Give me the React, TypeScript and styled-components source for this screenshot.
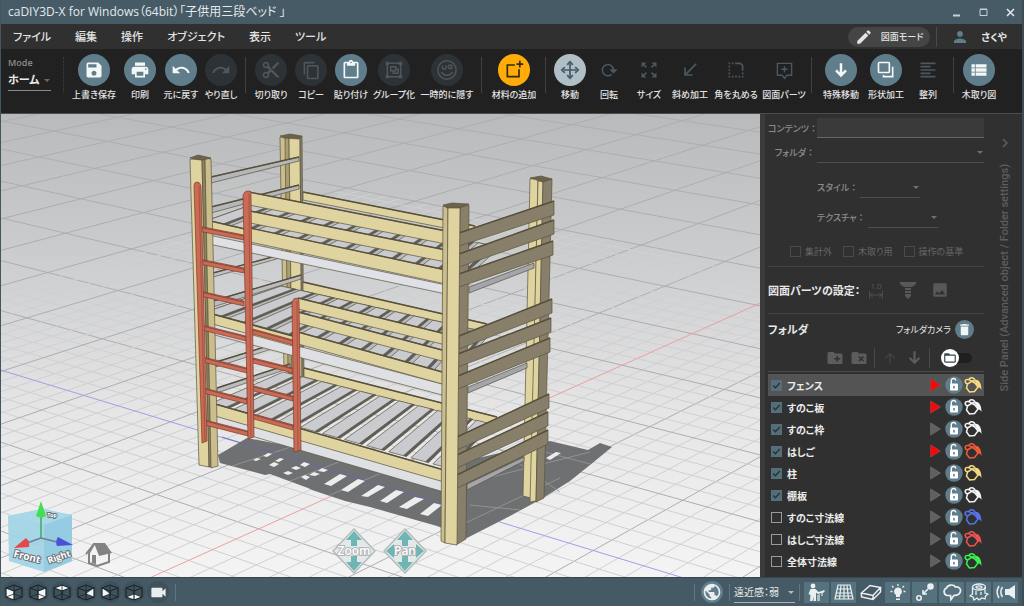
import React from "react";
import styled, { createGlobalStyle } from "styled-components";
import {
  MdSave, MdPrint, MdUndo, MdRedo, MdContentCut, MdContentCopy, MdContentPaste,
  MdZoomOutMap, MdCallReceived, MdRoundedCorner, MdFormatAlignLeft, MdViewList,
  MdPerson, MdEdit, MdCreateNewFolder, MdDelete, MdFolderOpen, MdImage,
  MdArrowUpward, MdVideocam, MdPublic, MdChevronRight,
} from "react-icons/md";

const Global = createGlobalStyle`
  *, *::before, *::after { box-sizing: border-box; }
  body {
    margin: 0;
    background: #212121;
    font-family: "Open Sans", "Noto Sans CJK JP", sans-serif;
    font-feature-settings: "palt";
    font-size: 10px;
    color: #e4e4e4;
  }
  button, input, select {
    font: inherit;
    font-feature-settings: inherit;
    color: inherit;
    margin: 0;
  }
  button { background: none; border: 0; padding: 0; cursor: pointer; }
`;

/* ---------- window ---------- */

const Window = styled.div`
  display: flex;
  flex-direction: column;
  height: 100vh;
  min-height: 600px;
  border-left: 1px solid #43565f;
  border-right: 2px solid #3c4d56;
  overflow: hidden;
`;

const TitleBar = styled.header`
  display: flex;
  align-items: center;
  flex: none;
  height: 24px;
  padding: 0 6px 0 7px;
  background: #465b66;
`;

const Title = styled.h1`
  flex: 1;
  margin: 0;
  font-size: 12px;
  font-weight: 400;
  line-height: 24px;
  white-space: nowrap;
  color: #e3e9ec;
`;

const WindowButtons = styled.div`
  display: flex;
  gap: 16px;
`;

const WindowButton = styled.button`
  width: 11px;
  height: 12px;
  svg { display: block; }
`;

const MenuBar = styled.nav`
  display: flex;
  align-items: center;
  flex: none;
  height: 25px;
  padding: 0 15px 0 12px;
  background: #303030;
`;

const MenuList = styled.div`
  display: flex;
  flex: 1;
  gap: 24px;
`;

const MenuItem = styled.button`
  font-size: 11px;
  font-weight: 500;
  line-height: 24px;
  white-space: nowrap;
`;

const DrawingMode = styled.button`
  display: flex;
  align-items: center;
  gap: 8px;
  height: 20px;
  padding: 0 7px;
  border-radius: 10px;
  background: #454545;
  font-size: 9px;
  font-weight: 500;
  white-space: nowrap;
`;

const MenuRule = styled.span`
  width: 1px;
  height: 20px;
  margin: 0 14px 0 6px;
  background: #4a4a4a;
`;

const User = styled.button`
  display: flex;
  align-items: center;
  gap: 12px;
  font-size: 10px;
  font-weight: 700;
  white-space: nowrap;
  svg { color: #607d8b; }
`;

/* ---------- tool bar ---------- */

const ToolBar = styled.div`
  display: flex;
  align-items: flex-start;
  flex: none;
  height: 65px;
  padding: 4px 8px 0 7px;
  background: #212121;
  border-bottom: 1px solid #4d4d4d;
  overflow: hidden;
`;

const ModeField = styled.label`
  display: flex;
  flex-direction: column;
  flex: none;
  width: 43px;
  margin-right: 8px;
  padding-top: 3px;
  font-size: 9px;
  font-weight: 600;
  line-height: 14px;
  color: #8c8c8c;
`;

const SelectBox = styled.span<{ $line?: string; $width?: number }>`
  position: relative;
  display: block;
  flex: ${(p) => (p.$width ? "none" : "1")};
  width: ${(p) => (p.$width ? p.$width + "px" : "auto")};
  border-bottom: 1px solid ${(p) => p.$line ?? "#4b4f50"};
  &::after {
    content: "";
    position: absolute;
    right: 1px;
    top: 50%;
    margin-top: -1px;
    border: 3px solid transparent;
    border-top-color: currentColor;
    opacity: 0.7;
    pointer-events: none;
  }
`;

const Select = styled.select<{ $size?: number; $weight?: number }>`
  display: block;
  width: 100%;
  height: 20px;
  padding: 0;
  border: 0;
  outline: 0;
  appearance: none;
  background: transparent;
  font-size: ${(p) => p.$size ?? 10}px;
  font-weight: ${(p) => p.$weight ?? 400};
  color: #ececec;
`;

const ToolRule = styled.span<{ $dotted?: boolean }>`
  flex: none;
  width: 0;
  height: 36px;
  margin: 4px 5px 0 4px;
  border-left: 1px ${(p) => (p.$dotted ? "dotted" : "solid")} #414141;
`;

const ToolButton = styled.button<{ $width: number }>`
  display: flex;
  flex-direction: column;
  align-items: center;
  flex: none;
  width: ${(p) => p.$width}px;
  font-size: 9px;
  font-weight: 500;
  line-height: 16px;
  white-space: nowrap;
`;

type Tone = "on" | "off" | "plain" | "accent" | "active";
const discColors: Record<Tone, [string, string]> = {
  on: ["#607d8b", "#f4f7f8"],
  off: ["#2d3236", "#50565a"],
  plain: ["transparent", "#4a5860"],
  accent: ["#ffab0a", "#33290f"],
  active: ["#b0bec5", "#46586a"],
};

const Disc = styled.span<{ $tone: Tone }>`
  display: flex;
  align-items: center;
  justify-content: center;
  width: 32px;
  height: 32px;
  margin: 1px 0;
  border-radius: 50%;
  background: ${(p) => discColors[p.$tone][0]};
  color: ${(p) => discColors[p.$tone][1]};
`;

/* ---------- work area ---------- */

const WorkArea = styled.main`
  display: flex;
  flex: 1;
  min-height: 0;
`;

const Viewport = styled.section`
  position: relative;
  flex: 1;
  min-width: 0;
  overflow: hidden;
`;

const Canvas = styled.svg`
  display: block;
  width: 100%;
  height: 100%;
`;

const NavButton = styled.button<{ $left: number; $bottom: number }>`
  position: absolute;
  left: ${(p) => p.$left}px;
  bottom: ${(p) => p.$bottom}px;
  svg { display: block; }
`;

const SidePanel = styled.aside`
  display: flex;
  flex: none;
  width: 262px;
  background: #303030;
  border-left: 5px solid #3b3b3b;
`;

const PanelBody = styled.div`
  width: 219px;
  padding: 4px 0 0 3px;
`;

const PanelTab = styled.button`
  display: flex;
  flex-direction: column;
  align-items: center;
  flex: 1;
  padding: 20px 0 0 4px;
  color: #5e5e5e;
`;

const TabText = styled.span`
  margin-top: 12px;
  writing-mode: vertical-rl;
  transform: rotate(180deg);
  font-family: Roboto, "Noto Sans", sans-serif;
  font-size: 11px;
  font-weight: 500;
  line-height: 16px;
  white-space: nowrap;
`;

const Field = styled.label<{ $indent?: number; $gap?: number }>`
  display: flex;
  align-items: center;
  height: 20px;
  margin-top: ${(p) => p.$gap ?? 0}px;
  padding-left: ${(p) => p.$indent ?? 0}px;
  font-size: 9px;
  font-weight: 500;
  color: #8c8c8c;
`;

const FieldName = styled.span<{ $width?: number }>`
  flex: none;
  width: ${(p) => (p.$width ? p.$width + "px" : "auto")};
  padding-right: 2px;
  text-align: right;
  white-space: nowrap;
`;

const Colon = styled.span`
  font-feature-settings: normal;
`;

const TextInput = styled.input`
  flex: 1;
  min-width: 0;
  height: 20px;
  padding: 0 4px;
  border: 0;
  border-bottom: 1px solid #666;
  outline: 0;
  background: #3a3a3a;
`;

const Flags = styled.div`
  display: flex;
  gap: 11px;
  height: 40px;
  padding: 18px 0 0 22px;
  border-bottom: 1px solid #444;
`;

const Flag = styled.label`
  display: flex;
  align-items: center;
  gap: 4px;
  height: 12px;
  font-size: 9px;
  color: #666;
  white-space: nowrap;
`;

const Check = styled.input<{ $dim?: boolean }>`
  flex: none;
  width: 11px;
  height: 11px;
  border: 1px solid ${(p) => (p.$dim ? "#4a4a4a" : "#9a9a9a")};
  appearance: none;
  background: transparent;
  &:checked {
    border-color: #546e7a;
    background: #546e7a
      url("data:image/svg+xml,%3Csvg xmlns='http://www.w3.org/2000/svg' viewBox='0 0 9 9'%3E%3Cpath d='M1.2 4.6l2.2 2.2L7.8 2' fill='none' stroke='%23263238' stroke-width='1.4'/%3E%3C/svg%3E")
      center / 9px no-repeat;
  }
`;

const PartsRow = styled.div`
  display: flex;
  align-items: center;
  justify-content: space-between;
  height: 47px;
  padding-right: 35px;
  border-bottom: 1px solid #444;
`;

const PartsIcons = styled.div`
  display: flex;
  gap: 14px;
  color: #585858;
`;

const Heading = styled.h2`
  margin: 0;
  font-size: 11px;
  font-weight: 700;
  white-space: nowrap;
  color: #e8e8e8;
`;

const IconButton = styled.button`
  display: flex;
  align-items: center;
  justify-content: center;
  width: 18px;
  height: 18px;
`;

const DimensionButton = styled(IconButton)`
  flex-direction: column;
  justify-content: flex-end;
  font-size: 8px;
  line-height: 10px;
`;

const FolderHead = styled.div`
  display: flex;
  align-items: center;
  justify-content: space-between;
  height: 30px;
  padding-right: 10px;
`;

const FolderCamera = styled.div`
  display: flex;
  align-items: center;
  gap: 4px;
  font-size: 9px;
`;

const RoundButton = styled.button`
  display: flex;
  align-items: center;
  justify-content: center;
  width: 19px;
  height: 19px;
  border-radius: 50%;
  background: #607d8b;
  color: #f0f4f5;
`;

const FolderTools = styled.div`
  display: flex;
  align-items: center;
  gap: 6px;
  height: 28px;
  padding-left: 58px;
  border-bottom: 1px solid #4a4a4a;
  color: #5c5c5c;
`;

const SmallRule = styled.span`
  width: 1px;
  height: 20px;
  background: #484848;
`;

const Toggle = styled.button`
  display: flex;
  align-items: center;
  width: 31px;
  height: 10px;
  margin-left: 5px;
  border-radius: 5px;
  background: #1f1f1f;
`;

const Knob = styled.span`
  display: flex;
  align-items: center;
  justify-content: center;
  width: 18px;
  height: 18px;
  border-radius: 50%;
  background: #fff;
  color: #37474f;
`;

const FolderList = styled.ul`
  margin: 2px 0 0;
  padding: 0;
  list-style: none;
`;

const FolderRow = styled.li<{ $selected?: boolean }>`
  display: flex;
  align-items: center;
  height: 22px;
  padding: 0 2px 0 3px;
  background: ${(p) => (p.$selected ? "#545454" : "transparent")};
`;

const FolderName = styled.label`
  display: flex;
  align-items: center;
  gap: 5px;
  flex: 1;
  font-size: 10px;
  font-weight: 700;
  white-space: nowrap;
  color: #ececec;
`;

const RowIcons = styled.div`
  display: flex;
  align-items: center;
  gap: 1px;
`;

const RowIcon = styled.button<{ $gap?: number }>`
  display: block;
  margin-right: ${(p) => p.$gap ?? 0}px;
  svg { display: block; }
`;

/* ---------- status bar ---------- */

const StatusBar = styled.footer`
  display: flex;
  align-items: center;
  flex: none;
  height: 29px;
  padding: 0 4px 0 2px;
  background: #455a64;
  border-top: 1px solid #37474f;
`;

const ViewGroup = styled.div`
  display: flex;
  align-items: center;
  flex: 1;
  gap: 2px;
`;

const ViewButton = styled.button`
  display: flex;
  align-items: center;
  justify-content: center;
  width: 22px;
  height: 22px;
  border-radius: 50%;
  background: #3f525b;
  color: #e8eef0;
`;

const StatusRule = styled.span`
  width: 1px;
  height: 17px;
  margin: 0 4px;
  background: #62767f;
`;

const Globe = styled(ViewButton)`
  background: #607d8b;
  margin: 0 2px;
`;

const Toggles = styled.div`
  display: flex;
  gap: 2px;
`;

const StatusToggle = styled.button<{ $off?: boolean }>`
  display: flex;
  align-items: center;
  justify-content: center;
  width: 25px;
  height: 21px;
  background: ${(p) => (p.$off ? "transparent" : "#56727f")};
  color: #eaf0f2;
`;

/* ---------- icons ---------- */

const Icon = ({ size = 20, view = 24, width = 2, children }: {
  size?: number; view?: number; width?: number; children: React.ReactNode;
}) => (
  <svg width={size} height={size} viewBox={`0 0 ${view} ${view}`} fill="none" stroke="currentColor" strokeWidth={width}>
    {children}
  </svg>
);

const GroupIcon = () => (
  <Icon width={1.8}>
    <path d="M4 4h16v16H4z" />
    <path d="M2 2h4v4H2zM18 2h4v4h-4zM2 18h4v4H2zM18 18h4v4h-4z" fill="currentColor" stroke="none" />
    <path d="M8 8h6v5H8zM11 13v3h6v-5h-3" />
  </Icon>
);
const HideIcon = () => (
  <Icon size={22} width={1.6}>
    <circle cx="12" cy="12" r="10" />
    <path d="M7 7v2c0 3 4 3 4 0V7" />
    <circle cx="15.5" cy="8.500" r="2" />
    <path d="M6 14c2 5 10 5 12 0" />
  </Icon>
);
const MaterialIcon = () => (
  <Icon>
    <path d="M13 6H4v14h14v-9" />
    <path d="M19 1v8M15 5h8" />
  </Icon>
);
const MoveIcon = () => (
  <Icon>
    <path d="M12 4v16M4 12h16" />
    <path d="M8.6 5.8 12 2.2l3.4 3.6M8.6 18.2l3.4 3.6 3.4-3.6M5.8 8.6 2.2 12l3.6 3.4M18.2 8.6l3.6 3.4-3.6 3.4" />
  </Icon>
);
const RotateIcon = () => (
  <Icon size={18}>
    <path d="M15.5 17.8A7.5 7.5 0 1 1 18 12.5" />
    <path d="M12.5 11h11l-5.5 6z" fill="currentColor" stroke="none" />
  </Icon>
);
const PartsIcon = () => (
  <Icon size={19} width={1.8}>
    <path d="M3 3h18v15h-6l-3 4-3-4H3zM12 6.5v8M8 10.5h8" />
  </Icon>
);
const DownIcon = () => (
  <Icon width={3}>
    <path d="M12 4v14M6 12.5l6 6 6-6" />
  </Icon>
);
const ShapeIcon = () => (
  <Icon>
    <rect x="3" y="3" width="13" height="12" rx="1" />
    <path d="M20 8v12H9v-2" />
  </Icon>
);
const DimensionIcon = () => (
  <svg width="18" height="10" viewBox="0 0 18 10" fill="none" stroke="currentColor">
    <path d="M1 0v10M17 0v10M2 5h14M5 2 2 5l3 3M13 2l3 3-3 3" />
  </svg>
);
const ScrewIcon = () => (
  <svg width="18" height="18" viewBox="0 0 18 18" fill="currentColor">
    <path d="M1 1h16v2l-4 3H5L1 3zM6 7h6v2H6zM6 10h6v2H6zM6 13h6v2l-3 3-3-3z" />
  </svg>
);
const FolderRemoveIcon = () => (
  <svg width="18" height="18" viewBox="0 0 24 24" fill="currentColor">
    <path d="M20 6h-8l-2-2H4a2 2 0 0 0-2 2v12a2 2 0 0 0 2 2h16a2 2 0 0 0 2-2V8a2 2 0 0 0-2-2z" />
    <path d="M12 10l6 6M18 10l-6 6" stroke="#303030" strokeWidth="2" />
  </svg>
);
const FolderDownIcon = () => (
  <Icon size={17} width={3}>
    <path d="M12 3v16M5 12.500l7 7 7-7" />
  </Icon>
);
const PlayMark = ({ on }: { on?: boolean }) => (
  <svg width="11" height="14" viewBox="0 0 11 14">
    <path d="M.7 1 10.300 7 .7 13z" fill={on ? "#fb0505" : "#606060"} stroke={on ? "#a23b3b" : "#686868"} />
  </svg>
);
const LockMark = () => (
  <svg width="18" height="18" viewBox="0 0 18 18">
    <circle cx="9" cy="9" r="8.700" fill="#607d8b" />
    <path d="M6.300 8V5.200a2.300 2.300 0 0 1 4.600-.7" fill="none" stroke="#fff" strokeWidth="1.400" />
    <rect x="5" y="7.600" width="8" height="7" rx="1" fill="#fff" />
    <path d="M9 10v2.500" stroke="#546e7a" strokeWidth="1.400" />
  </svg>
);
const PaintMark = ({ color }: { color: string }) => (
  <svg width="18" height="18" viewBox="0 0 18 18" fill="none" stroke={color} strokeWidth="1.500">
    <path d="M3.500 8 9 4.500 14 11l-3.500 4.500-5 .5L2.500 12z" />
    <path d="M4 8C0 7 .5 3 4 3.500c3 .4 5 3 7 3.500M5 4c.5-3 5-3 6 .5" />
    <path d="M10 3.500c5 0 7.500 3 7.500 10.500-1-2-2-2.500-3.500-2.500z" fill={color} stroke="none" />
  </svg>
);

const cubeFaces: Record<string, string> = {
  front: "2,5 10,8 10,17 2,14",
  right: "10,8 18,5 18,14 10,17",
  top: "2,5 10,2 18,5 10,8",
  back: "10,11 18,5 18,14 10,11",
  left: "2,5 10,11 2,14",
  bottom: "2,14 10,11 18,14 10,17",
};
const ViewCube = ({ face }: { face: string }) => (
  <svg width="20" height="19" viewBox="0 0 20 19" fill="none" stroke="#1b262c" strokeWidth="1.200" strokeLinejoin="round">
    <polygon points={cubeFaces[face]} fill="#f5f7f7" stroke="none" />
    <path d="M2 5 10 2l8 3v9l-8 3-8-3zM2 5l8 3 8-3M10 8v9" />
    <path d="M10 2v9M2 14l8-3 8 3" strokeWidth="0.800" />
  </svg>
);

const PersonIcon = () => (
  <svg width="19" height="19" viewBox="0 0 19 19" fill="currentColor">
    <circle cx="6" cy="3" r="2.400" />
    <path d="M3.500 6h5l3 3 6-2v2l-2 1v3h-1v-3l-4 1-1.500-1.500V18H6.500v-5l-1 5H3l.5-6-2-1z" />
    <path d="M10 12l3-1v7h-3z" opacity=".6" />
  </svg>
);
const GridIcon = () => (
  <Icon size={20} view={20} width={1.2}>
    <path d="M4 3h12l3 14H1zM3.300 7h13.500M2.500 11h15M7 3 5.500 17M10 3v14M13 3l1.500 14M1.700 14h16.600" />
  </Icon>
);
const BoardIcon = () => (
  <Icon size={22} view={22} width={1.5}>
    <path d="M1.500 12 10 4.500l10.500 2L13 14.500zM1.500 12v4L13 18.500l7.500-7.500V6.500M13 14.500v4" />
  </Icon>
);
const BulbIcon = () => (
  <Icon size={18} view={18} width={1.3}>
    <path d="M9 4.500a4 4 0 0 1 2 7.400V14H7v-2.100a4 4 0 0 1 2-7.400zM7 15.500h4v1.500H7z" fill="currentColor" stroke="none" />
    <path d="M9 1v2M3 3l1.500 1.500M15 3l-1.500 1.500M1.500 8.500h2M14.500 8.500h2" />
  </Icon>
);
const LinkIcon = () => (
  <Icon size={19} view={19} width={1.6}>
    <circle cx="4" cy="15" r="2.200" />
    <circle cx="15.500" cy="3.500" r="2.500" fill="currentColor" />
    <path d="M13 6l-5 5M8 7v4h4" />
  </Icon>
);
const CloudIcon = () => (
  <Icon size={20} view={20} width={1.7}>
    <path d="M5 13.500a4 4 0 0 1-.5-7.500C6 2.500 11.500 2 13.500 5c4-.5 6 2.500 4.500 5.500-1 2.500-3 3-6 2.800L9 17.500 8.500 13.500z" />
  </Icon>
);
const StumpIcon = () => (
  <Icon size={20} view={20} width={1.3}>
    <ellipse cx="10" cy="5" rx="6.500" ry="3" />
    <ellipse cx="10" cy="5" rx="3" ry="1.200" />
    <path d="M3.500 5v7L1 14l3 1 1 3 3-2 2 2 3-2 3 1 .5-3 2.500-2-3-1V5M7 9v4M12 10v3" />
  </Icon>
);
const SoundIcon = () => (
  <Icon size={20} view={20} width={1.5}>
    <path d="M9 7h4l6-4v14l-6-4H9z" fill="currentColor" stroke="none" />
    <path d="M6.500 5c-2 3-2 7 0 10M3 4C.5 8 .5 12 3 16" />
  </Icon>
);

/* ---------- 3D scene ---------- */

type Pt = [number, number];
const lerp = (a: Pt, b: Pt, t: number): Pt => [a[0] + (b[0] - a[0]) * t, a[1] + (b[1] - a[1]) * t];
const toPoints = (pts: Pt[]) => pts.map((p) => p.map((n) => n.toFixed(1)).join(",")).join(" ");

const WOOD = "#dfd3a0";
const WOOD_DEEP = "#cbbe8c";
const SHADE = "#877f69";
const EDGE = "#5a543f";
const RED = "#cb6a55";

/* Ground plane: every line of a family meets at one point of the horizon. */
const origin: Pt = [365, 481];
const vanishX: Pt = [2140, -318];
const vanishZ: Pt = [-2260, -318];
const ground = (u: number, v: number): Pt => {
  const a = 0.0113 * u;
  const b = 0.008 * v;
  const w = 1 + a + b;
  return [
    (origin[0] + a * vanishX[0] + b * vanishZ[0]) / w,
    (origin[1] + a * vanishX[1] + b * vanishZ[1]) / w,
  ];
};

const GroundLine = ({ from, to, color }: { from: Pt; to: Pt; color: string }) => {
  const a = ground(...from);
  const b = ground(...to);
  return <line x1={a[0]} y1={a[1]} x2={b[0]} y2={b[1]} stroke={color} strokeWidth="1" />;
};

const Ground = () => {
  const lines: React.ReactNode[] = [];
  for (let i = -30; i <= 120; i++) {
    const major = i % 5 === 0;
    const end = major ? 160 : 30;
    if (i === 0 || (!major && i > 30)) continue;
    const color = major ? "#adaeb0" : "#cfd0d2";
    lines.push(<GroundLine key={`u${i}`} from={[i, -30]} to={[i, end]} color={color} />);
    lines.push(<GroundLine key={`v${i}`} from={[-30, i]} to={[end, i]} color={color} />);
  }
  return (
    <g>
      {lines}
      <GroundLine from={[-30, 0]} to={[80, 0]} color="#ee9f9f" />
      <GroundLine from={[0, -30]} to={[0, 80]} color="#9f9fe6" />
    </g>
  );
};

const Quad = ({ pts, fill, edge = EDGE }: { pts: Pt[]; fill: string; edge?: string }) => (
  <polygon points={toPoints(pts)} fill={fill} stroke={edge} strokeWidth="0.7" strokeLinejoin="round" />
);

/* A board seen from its wide side: start and end of the upper edge, height at each end. */
const Board = ({ a, b, h, h2 = h, fill = WOOD }: { a: Pt; b: Pt; h: number; h2?: number; fill?: string }) => (
  <g>
    <Quad pts={[a, b, [b[0], b[1] + h2], [a[0], a[1] + h]]} fill={fill} />
    <line x1={a[0]} y1={a[1]} x2={b[0]} y2={b[1]} stroke="#57503c" strokeWidth="1.400" />
  </g>
);

const Slats = ({ front, back, count, open }: { front: [Pt, Pt]; back: [Pt, Pt]; count: number; open?: boolean }) => (
  <g>
    {!open && <Quad pts={[front[0], back[0], back[1], front[1]]} fill="#b9bbbe" />}
    {Array.from({ length: count }, (_, i) => {
      const t = i / count;
      const e = (i + 0.66) / count;
      const s = (i + 0.8) / count;
      return (
        <g key={i}>
          <Quad pts={[lerp(...front, e), lerp(...back, e), lerp(...back, s), lerp(...front, s)]} fill="#5c5d60" />
          <Quad pts={[lerp(...front, t), lerp(...back, t), lerp(...back, e), lerp(...front, e)]} fill="#c9cbcf" />
        </g>
      );
    })}
  </g>
);

const shadowHoles: Pt[][] = [
  [[263, 456], [268, 453], [272, 454], [267, 457]],
  [[253, 460], [257, 458], [261, 459], [256, 461]],
  [[275, 461], [280, 458], [284, 459], [279, 462]],
  [[269, 465], [274, 462], [279, 464], [274, 467]],
  [[300, 465], [304, 462], [310, 464], [305, 467]],
  [[291, 468], [296, 466], [301, 468], [296, 470]],
  [[283, 473], [288, 471], [293, 473], [288, 475]],
  [[318, 471], [322, 468], [328, 470], [324, 472]],
  [[309, 475], [314, 472], [320, 474], [315, 476]],
  [[301, 477], [305, 475], [310, 477], [306, 480]],
  [[324, 484], [340, 474], [347, 476], [331, 486]],
  [[341, 490], [358, 479], [365, 481], [348, 492]],
  [[361, 496], [378, 485], [385, 487], [368, 497]],
  [[380, 501], [396, 490], [404, 492], [387, 503]],
  [[399, 507], [415, 497], [424, 499], [407, 509]],
  [[420, 514], [434, 503], [442, 505], [428, 516]],
  [[546, 458], [556, 452], [561, 453], [550, 460]],
];

const ladderRungs: [Pt, Pt][] = [
  [[198, 226], [244, 235]], [[199, 259], [244, 268]], [[200, 291], [244, 301]],
  [[202, 325], [246, 336]], [[203, 357], [247, 368]], [[204, 388], [247, 399]],
  [[205, 420], [248, 431]], [[249, 328], [293, 340]], [[249, 357], [293, 368]],
  [[250, 385], [293, 396]], [[250, 413], [293, 425]],
];

const endBoards: [number, number, number, number][] = [
  [459, 233, 554, 201], [459, 254, 554, 220], [459, 274, 553, 241],
  [459, 336, 552, 299], [458, 354, 551, 318], [458, 376, 550, 338],
  [457, 437, 549, 394], [457, 455, 548, 412], [457, 475, 548, 430],
];

const Bed = () => (
  <g>
    {/* shadow on the floor */}
    <polygon
      points="218,455 247,438 300,448 442,470 470,460 550,441 588,450 600,443 612,447 590,465 570,481 543,498 510,516 467,538 437,526 370,507 345,501 312,490 308,488 270,474 265,475 220,463"
      fill="#6f7072"
    />
    <g stroke="#9a9b9d" strokeWidth="0.800">
      <path d="M232 466 300 444M290 481 380 446M330 495 440 448M455 528 560 478M480 480 590 452M500 450 560 492M470 505 520 510M545 452 590 464" />
    </g>
    <path d="M222 437 442 504" stroke="#6667b0" strokeWidth="0.800" />
    {shadowHoles.map((h, i) => <polygon key={i} points={toPoints(h)} fill="#ededee" />)}

    {/* far left post with the end boards */}
    <Quad pts={[[280, 137], [288, 137], [291, 372], [284, 370]]} fill={WOOD_DEEP} />
    <Quad pts={[[285, 137], [289, 137], [292, 374], [288, 373]]} fill="#a99d72" />
    <Quad pts={[[289, 137], [300, 138], [302, 377], [292, 375]]} fill={WOOD} />
    <Quad pts={[[300, 138], [302, 136], [304, 376], [302, 377]]} fill={SHADE} />
    <Quad pts={[[280, 136], [290, 134], [302, 136], [299, 139], [284, 138]]} fill="#6a634a" />
    <Board a={[211, 177]} b={[299, 157]} h={6} h2={4} fill="#b4b6ba" />
    <Board a={[211, 207]} b={[299, 185]} h={6} h2={4} fill="#b4b6ba" />
    <Board a={[213, 273]} b={[287, 253]} h={4} h2={3} fill="#c0c2c5" />
    <Board a={[213, 301]} b={[301, 275]} h={6} h2={4} fill="#b9bbbf" />
    <Board a={[216, 362]} b={[284, 341]} h={5} h2={4} fill="#c0c2c5" />
    <Board a={[217, 388]} b={[290, 364]} h={5} h2={4} fill="#b9bbbf" />

    {/* far right post */}
    <Quad pts={[[530, 179], [538, 178], [531, 498], [523, 496]]} fill={WOOD} />
    <Quad pts={[[538, 181], [543, 181], [536, 501], [530, 502]]} fill={WOOD} />
    <Quad pts={[[543, 181], [552, 179], [544, 498], [536, 502]]} fill={SHADE} />
    <Quad pts={[[530, 178], [541, 176], [552, 179], [543, 182]]} fill="#6a634a" />

    {/* top bunk */}
    <Board a={[303, 192]} b={[475, 226]} h={8} />
    <Slats front={[[203, 222], [458, 285]]} back={[[262, 201], [500, 247]]} count={11} />
    <Board a={[202, 219]} b={[245, 229]} h={9} h2={9} />
    <Quad pts={[[204, 234], [446, 285], [446, 294], [204, 243]]} fill="#e0e1e6" />
    <Board a={[250, 228]} b={[446, 270]} h={14} />
    <Board a={[250, 211]} b={[446, 250]} h={12} />
    <Board a={[249, 192]} b={[446, 231]} h={13} />

    {/* middle bunk */}
    <Board a={[303, 282]} b={[487, 324]} h={9} />
    <Slats front={[[206, 312], [455, 378]]} back={[[281, 286], [490, 333]]} count={11} />
    <Quad pts={[[207, 322], [446, 385], [446, 396], [207, 333]]} fill="#dfe0e4" />
    <Board a={[205, 312]} b={[300, 338]} h={10} />
    <Board a={[298, 332]} b={[446, 373]} h={12} />
    <Board a={[298, 312]} b={[446, 351]} h={11} />
    <Board a={[298, 298]} b={[446, 334]} h={11} />

    {/* bottom bunk */}
    <Board a={[304, 368]} b={[497, 417]} h={9} />
    <Slats front={[[212, 403], [455, 470]]} back={[[283, 372], [496, 425]]} count={11} open />
    <Quad pts={[[210, 414], [444, 481], [444, 492], [210, 424]]} fill="#dfe0e4" />
    <Board a={[208, 402]} b={[444, 470]} h={12} />

    {/* near left post */}
    <Quad pts={[[190, 159], [202, 160], [209, 467], [199, 465]]} fill={WOOD} />
    <Quad pts={[[202, 159], [205, 158], [211, 467], [209, 467]]} fill="#8d835f" />
    <Quad pts={[[205, 158], [211, 159], [218, 466], [211, 468]]} fill={WOOD_DEEP} />
    <Quad pts={[[190, 158], [198, 155], [211, 158], [203, 160]]} fill="#6a634a" />

    {/* ladder */}
    {ladderRungs.map(([a, b], i) => (
      <g key={i}>
        <Quad pts={[a, b, [b[0], b[1] + 5], [a[0], a[1] + 5]]} fill={RED} edge="#7a3d31" />
        <line x1={a[0]} y1={a[1] + 1} x2={b[0]} y2={b[1] + 1} stroke="#8c4a3d" strokeWidth="1" />
      </g>
    ))}
    <g fill={RED} stroke="#7a3d31" strokeWidth="0.700">
      <path d="M194 186q0-4 3-4t4 4l6 255-5 2z" />
      <path d="M243 196q1-5 5-5t3 3l3 243-6 2z" />
      <path d="M292 303q1-5 4-5t3 3l2 149-7 2z" />
    </g>
    <path d="M199 186l6 256M249 194l2 244M297 301l1 150" stroke="#a35445" strokeWidth="1" fill="none" />

    {/* near right post and end boards */}
    <Quad pts={[[460, 207], [469, 205], [466, 539], [456, 545]]} fill={SHADE} />
    <Quad pts={[[469, 287], [534, 263], [534, 268], [469, 293]]} fill="#a3a5ab" />
    <Quad pts={[[468, 387], [527, 363], [527, 368], [468, 393]]} fill="#a3a5ab" />
    <Quad pts={[[467, 484], [524, 457], [524, 461], [467, 490]]} fill="#a3a5ab" />
    {endBoards.map(([x1, y1, x2, y2], i) => (
      <Board key={i} a={[x1, y1]} b={[x2, y2]} h={13} h2={14} fill={SHADE} />
    ))}
    <Quad pts={[[443, 206], [448, 207], [445, 543], [441, 541]]} fill={WOOD_DEEP} />
    <Quad pts={[[448, 207], [460, 207], [457, 545], [445, 543]]} fill={WOOD} />
    <Quad pts={[[443, 205], [452, 203], [469, 204], [460, 208], [447, 208]]} fill="#6a634a" />
  </g>
);

const AxisCube = () => (
  <svg width="68" height="74" viewBox="6 500 68 74">
    <polygon points="8,516 42,509 72,515 72,561 44,572 9,561" fill="#9fd3e6" opacity="0.9" />
    <polygon points="8,516 42,509 72,515 44,525" fill="#a9d8e8" />
    <polygon points="44,525 72,515 72,561 44,572" fill="#95cce1" />
    <path d="M41 538V510" stroke="#3cae5a" strokeWidth="1.500" />
    <path d="M41 538 24 544M41 538l20 5" stroke="#6b7f99" strokeWidth="1.500" />
    <path d="M41 501l5 15q-5 3-10 0z" fill="#45dd52" />
    <path d="M14 548 26 538q4 3 3 9z" fill="#e5484a" />
    <path d="M73 545 58 537q-3 4-1 9z" fill="#4a50d8" />
    <g fontFamily="Open Sans, sans-serif" fontWeight="700" fill="#fff" stroke="#6d7478" strokeWidth="2" paintOrder="stroke" textAnchor="middle">
      <text x="27" y="560" fontSize="10" transform="rotate(14 27 557)">Front</text>
      <text x="59" y="560" fontSize="9" transform="rotate(-20 59 557)">Right</text>
      <text x="52" y="517" fontSize="5">Top</text>
    </g>
  </svg>
);

const HomeIcon = () => (
  <svg width="28" height="26" viewBox="0 0 28 26">
    <path d="M4 12v10l8 3 12-4V11L19 3 9 3z" fill="#f2f2f2" stroke="#828282" strokeWidth="2" />
    <path d="M9 3 1 13" stroke="#828282" strokeWidth="2" />
    <path d="M9 2h11l7 10-13 3z" fill="#828282" />
    <path d="M7 14h4v9l-4-1z" fill="#828282" />
  </svg>
);

const ArrowDiamond = ({ label, sideways }: { label: string; sideways?: boolean }) => (
  <svg width="44" height="46" viewBox="0 0 44 46">
    <path d="M22 1 43 23 22 45 1 23z" fill="#e3e9e9" stroke="#b3bcbc" strokeWidth="1.500" />
    <g fill="#6fb5b4">
      <path d="M22 3l8 9h-5v6h-6v-6h-5z" />
      <path d="M22 43l8-9h-5v-6h-6v6h-5z" />
      {sideways && <path d="M3 23l8-7v4h5v6h-5v4zM41 23l-8-7v4h-5v6h5v4z" />}
    </g>
    <text x="22" y="27" textAnchor="middle" fontFamily="Open Sans, sans-serif" fontSize="12" fontWeight="600" fill="#fff" stroke="#b0b4b5" strokeWidth="2" paintOrder="stroke">
      {label}
    </text>
  </svg>
);

/* ---------- data ---------- */

type Tool = { label: string; width: number; tone: Tone; icon: React.ReactNode };
const toolGroups: Tool[][] = [
  [
    { label: "上書き保存", width: 50, tone: "on", icon: <MdSave size={20} /> },
    { label: "印刷", width: 42, tone: "on", icon: <MdPrint size={20} /> },
    { label: "元に戻す", width: 40, tone: "on", icon: <MdUndo size={20} /> },
    { label: "やり直し", width: 40, tone: "off", icon: <MdRedo size={20} /> },
  ],
  [
    { label: "切り取り", width: 40, tone: "off", icon: <MdContentCut size={20} /> },
    { label: "コピー", width: 40, tone: "off", icon: <MdContentCopy size={19} /> },
    { label: "貼り付け", width: 40, tone: "on", icon: <MdContentPaste size={20} /> },
    { label: "グループ化", width: 46, tone: "off", icon: <GroupIcon /> },
    { label: "一時的に隠す", width: 60, tone: "off", icon: <HideIcon /> },
  ],
  [{ label: "材料の追加", width: 54, tone: "accent", icon: <MaterialIcon /> }],
  [
    { label: "移動", width: 38, tone: "active", icon: <MoveIcon /> },
    { label: "回転", width: 40, tone: "plain", icon: <RotateIcon /> },
    { label: "サイズ", width: 40, tone: "plain", icon: <MdZoomOutMap size={20} /> },
    { label: "斜め加工", width: 42, tone: "plain", icon: <MdCallReceived size={20} /> },
    { label: "角を丸める", width: 50, tone: "plain", icon: <MdRoundedCorner size={20} /> },
    { label: "図面パーツ", width: 46, tone: "plain", icon: <PartsIcon /> },
  ],
  [
    { label: "特殊移動", width: 48, tone: "on", icon: <DownIcon /> },
    { label: "形状加工", width: 42, tone: "on", icon: <ShapeIcon /> },
    { label: "整列", width: 42, tone: "plain", icon: <MdFormatAlignLeft size={20} /> },
  ],
  [{ label: "木取り図", width: 40, tone: "on", icon: <MdViewList size={20} /> }],
];

const folders = [
  { name: "フェンス", shown: true, play: true, color: "#f3d983" },
  { name: "すのこ板", shown: true, play: true, color: "#f4f4f4" },
  { name: "すのこ枠", shown: true, play: false, color: "#f4f4f4" },
  { name: "はしご", shown: true, play: true, color: "#ee5b36" },
  { name: "柱", shown: true, play: false, color: "#f3d983" },
  { name: "棚板", shown: true, play: false, color: "#f4f4f4" },
  { name: "すのこ寸法線", shown: false, play: false, color: "#5674e6" },
  { name: "はしご寸法線", shown: false, play: false, color: "#f05252" },
  { name: "全体寸法線", shown: false, play: false, color: "#3cf050" },
];

const menus = ["ファイル", "編集", "操作", "オブジェクト", "表示", "ツール"];

const statusToggles: { name: string; icon: React.ReactNode; off?: boolean }[] = [
  { name: "人物", icon: <PersonIcon /> },
  { name: "グリッド", icon: <GridIcon /> },
  { name: "板", icon: <BoardIcon />, off: true },
  { name: "照明", icon: <BulbIcon /> },
  { name: "スナップ", icon: <LinkIcon /> },
  { name: "コメント", icon: <CloudIcon /> },
  { name: "木目", icon: <StumpIcon /> },
  { name: "音", icon: <SoundIcon /> },
];

export default function App() {
  return (
    <Window>
      <Global />
      <TitleBar>
        <Title>caDIY3D-X for Windows（64bit）「子供用三段ベッド 」</Title>
        <WindowButtons>
          <WindowButton aria-label="最小化">
            <svg width="11" height="12"><path d="M2 9.500h7" stroke="#c8d1d6" strokeWidth="2" /></svg>
          </WindowButton>
          <WindowButton aria-label="最大化">
            <svg width="11" height="12"><path d="M2 3.500h7v6H2zM2 3h7" fill="none" stroke="#c8d1d6" /></svg>
          </WindowButton>
          <WindowButton aria-label="閉じる">
            <svg width="11" height="12"><path d="M2 3l7 7M9 3l-7 7" stroke="#dfe5e8" strokeWidth="1.600" /></svg>
          </WindowButton>
        </WindowButtons>
      </TitleBar>

      <MenuBar>
        <MenuList>
          {menus.map((m) => <MenuItem key={m}>{m}</MenuItem>)}
        </MenuList>
        <DrawingMode><MdEdit size={18} />図面モード</DrawingMode>
        <MenuRule />
        <User><MdPerson size={18} />さくや</User>
      </MenuBar>

      <ToolBar>
        <ModeField>
          Mode
          <SelectBox $line="#8a8a8a">
            <Select $size={11} $weight={700} defaultValue="home">
              <option value="home">ホーム</option>
            </Select>
          </SelectBox>
        </ModeField>
        <ToolRule $dotted />
        {toolGroups.map((group, i) => (
          <React.Fragment key={i}>
            {i > 0 && <ToolRule />}
            {group.map((t) => (
              <ToolButton key={t.label} $width={t.width}>
                <Disc $tone={t.tone}>{t.icon}</Disc>
                {t.label}
              </ToolButton>
            ))}
          </React.Fragment>
        ))}
      </ToolBar>

      <WorkArea>
        <Viewport>
          <Canvas viewBox="1 114 759 463" preserveAspectRatio="xMidYMid slice">
            <defs>
              <linearGradient id="floor" x1="0" y1="0" x2="0" y2="1">
                <stop offset="0" stopColor="#b9babb" />
                <stop offset="0.3" stopColor="#cbcccd" />
                <stop offset="0.65" stopColor="#e6e6e7" />
                <stop offset="1" stopColor="#f4f4f5" />
              </linearGradient>
            </defs>
            <rect x="-1000" y="114" width="3000" height="463" fill="url(#floor)" />
            <Ground />
            <Bed />
          </Canvas>
          <NavButton $left={5} $bottom={3} aria-label="視点"><AxisCube /></NavButton>
          <NavButton $left={84} $bottom={10} aria-label="ホーム"><HomeIcon /></NavButton>
          <NavButton $left={331} $bottom={3}><ArrowDiamond label="Zoom" /></NavButton>
          <NavButton $left={382} $bottom={3}><ArrowDiamond label="Pan" sideways /></NavButton>
        </Viewport>

        <SidePanel>
          <PanelBody>
            <Field>
              <FieldName $width={49}>コンテンツ<Colon>：</Colon></FieldName>
              <TextInput type="text" />
            </Field>
            <Field $gap={4}>
              <FieldName $width={49}>フォルダ<Colon>：</Colon></FieldName>
              <SelectBox><Select><option aria-label="なし" /></Select></SelectBox>
            </Field>
            <Field $indent={49} $gap={15}>
              <FieldName>スタイル<Colon>：</Colon></FieldName>
              <SelectBox $width={60}><Select><option aria-label="なし" /></Select></SelectBox>
            </Field>
            <Field $indent={49} $gap={10}>
              <FieldName>テクスチャ<Colon>：</Colon></FieldName>
              <SelectBox $width={70}><Select><option aria-label="なし" /></Select></SelectBox>
            </Field>
            <Flags>
              {["集計外", "木取り用", "操作の基準"].map((f) => (
                <Flag key={f}><Check type="checkbox" $dim />{f}</Flag>
              ))}
            </Flags>
            <PartsRow>
              <Heading>図面パーツの設定：</Heading>
              <PartsIcons>
                <DimensionButton aria-label="寸法">1.0<DimensionIcon /></DimensionButton>
                <IconButton aria-label="ねじ"><ScrewIcon /></IconButton>
                <IconButton aria-label="画像"><MdImage size={18} /></IconButton>
              </PartsIcons>
            </PartsRow>
            <FolderHead>
              <Heading>フォルダ</Heading>
              <FolderCamera>
                フォルダカメラ
                <RoundButton aria-label="削除"><MdDelete size={15} /></RoundButton>
              </FolderCamera>
            </FolderHead>
            <FolderTools>
              <IconButton aria-label="フォルダを追加"><MdCreateNewFolder size={18} /></IconButton>
              <IconButton aria-label="フォルダを削除"><FolderRemoveIcon /></IconButton>
              <SmallRule />
              <IconButton aria-label="上へ"><MdArrowUpward size={16} color="#444" /></IconButton>
              <IconButton aria-label="下へ"><FolderDownIcon /></IconButton>
              <SmallRule />
              <Toggle aria-label="フォルダ表示"><Knob><MdFolderOpen size={14} /></Knob></Toggle>
            </FolderTools>
            <FolderList>
              {folders.map((f, i) => (
                <FolderRow key={f.name} $selected={i === 0}>
                  <FolderName>
                    <Check type="checkbox" defaultChecked={f.shown} />
                    {f.name}
                  </FolderName>
                  <RowIcons>
                    <RowIcon aria-label="選択" $gap={3}><PlayMark on={f.play} /></RowIcon>
                    <RowIcon aria-label="ロック"><LockMark /></RowIcon>
                    <RowIcon aria-label="色"><PaintMark color={f.color} /></RowIcon>
                  </RowIcons>
                </FolderRow>
              ))}
            </FolderList>
          </PanelBody>
          <PanelTab>
            <MdChevronRight size={18} />
            <TabText>Side Panel (Advanced object / Folder settings)</TabText>
          </PanelTab>
        </SidePanel>
      </WorkArea>

      <StatusBar>
        <ViewGroup>
          {Object.keys(cubeFaces).map((f) => (
            <ViewButton key={f} aria-label={f}><ViewCube face={f} /></ViewButton>
          ))}
          <ViewButton aria-label="カメラ"><MdVideocam size={19} /></ViewButton>
          <StatusRule />
        </ViewGroup>
        <StatusRule />
        <Globe aria-label="環境"><MdPublic size={20} /></Globe>
        <StatusRule />
        <SelectBox $width={61} $line="#a9b6bc">
          <Select aria-label="遠近感" defaultValue="weak">
            <option value="weak">遠近感：弱</option>
          </Select>
        </SelectBox>
        <StatusRule />
        <Toggles>
          {statusToggles.map((t) => (
            <StatusToggle key={t.name} $off={t.off} aria-label={t.name}>{t.icon}</StatusToggle>
          ))}
        </Toggles>
      </StatusBar>
    </Window>
  );
}
